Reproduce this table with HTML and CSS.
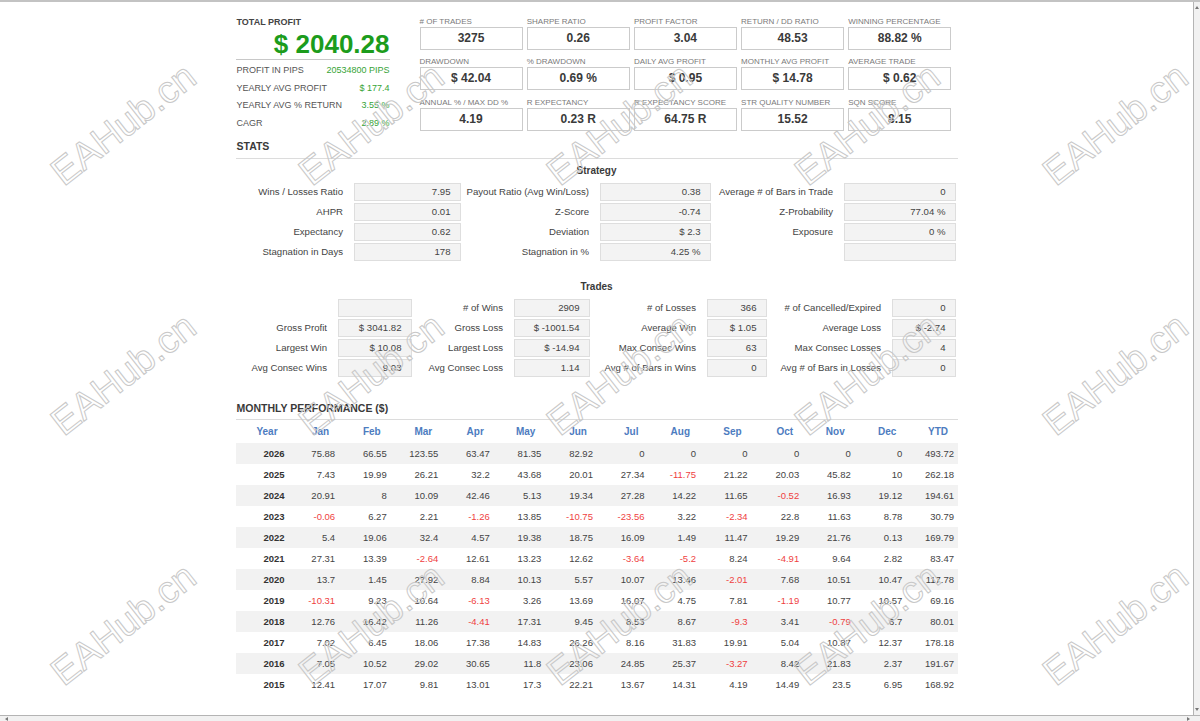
FILE: index.html
```html
<!DOCTYPE html>
<html>
<head>
<meta charset="utf-8">
<title>Strategy Report</title>
<link rel="stylesheet" href="styles.css">
</head>
<body>
<div class="window">
  <div class="viewport">
    <div class="report">
      <div class="top">
        <div class="summary">
          <div class="summary-label">TOTAL PROFIT</div>
          <div class="summary-total">$ 2040.28</div>
          <div class="summary-rows">
            <div class="srow"><span>PROFIT IN PIPS</span><span class="green">20534800 PIPS</span></div>
            <div class="srow"><span>YEARLY AVG PROFIT</span><span class="green">$ 177.4</span></div>
            <div class="srow"><span>YEARLY AVG % RETURN</span><span class="green">3.55 %</span></div>
            <div class="srow"><span>CAGR</span><span class="green">2.89 %</span></div>
          </div>
        </div>
        <div class="kpis">
          <div class="kpi"><div class="kpi-label"># OF TRADES</div><div class="kpi-box">3275</div></div>
          <div class="kpi"><div class="kpi-label">SHARPE RATIO</div><div class="kpi-box">0.26</div></div>
          <div class="kpi"><div class="kpi-label">PROFIT FACTOR</div><div class="kpi-box">3.04</div></div>
          <div class="kpi"><div class="kpi-label">RETURN / DD RATIO</div><div class="kpi-box">48.53</div></div>
          <div class="kpi"><div class="kpi-label">WINNING PERCENTAGE</div><div class="kpi-box">88.82 %</div></div>
          <div class="kpi"><div class="kpi-label">DRAWDOWN</div><div class="kpi-box">$ 42.04</div></div>
          <div class="kpi"><div class="kpi-label">% DRAWDOWN</div><div class="kpi-box">0.69 %</div></div>
          <div class="kpi"><div class="kpi-label">DAILY AVG PROFIT</div><div class="kpi-box">$ 0.95</div></div>
          <div class="kpi"><div class="kpi-label">MONTHLY AVG PROFIT</div><div class="kpi-box">$ 14.78</div></div>
          <div class="kpi"><div class="kpi-label">AVERAGE TRADE</div><div class="kpi-box">$ 0.62</div></div>
          <div class="kpi"><div class="kpi-label">ANNUAL % / MAX DD %</div><div class="kpi-box">4.19</div></div>
          <div class="kpi"><div class="kpi-label">R EXPECTANCY</div><div class="kpi-box">0.23 R</div></div>
          <div class="kpi"><div class="kpi-label">R EXPECTANCY SCORE</div><div class="kpi-box">64.75 R</div></div>
          <div class="kpi"><div class="kpi-label">STR QUALITY NUMBER</div><div class="kpi-box">15.52</div></div>
          <div class="kpi"><div class="kpi-label">SQN SCORE</div><div class="kpi-box">8.15</div></div>
        </div>
      </div>

      <h2 class="section-head stats-head">STATS</h2>

      <h3 class="sub-head strategy-head">Strategy</h3>
      <div class="grid strategy-grid">
        <div class="lbl">Wins / Losses Ratio</div><div class="val">7.95</div>
        <div class="lbl">Payout Ratio (Avg Win/Loss)</div><div class="val">0.38</div>
        <div class="lbl">Average # of Bars in Trade</div><div class="val">0</div>
        <div class="lbl">AHPR</div><div class="val">0.01</div>
        <div class="lbl">Z-Score</div><div class="val">-0.74</div>
        <div class="lbl">Z-Probability</div><div class="val">77.04 %</div>
        <div class="lbl">Expectancy</div><div class="val">0.62</div>
        <div class="lbl">Deviation</div><div class="val">$ 2.3</div>
        <div class="lbl">Exposure</div><div class="val">0 %</div>
        <div class="lbl">Stagnation in Days</div><div class="val">178</div>
        <div class="lbl">Stagnation in %</div><div class="val">4.25 %</div>
        <div class="lbl"></div><div class="val"></div>
      </div>

      <h3 class="sub-head trades-head">Trades</h3>
      <div class="grid trades-grid">
        <div class="lbl"></div><div class="val"></div>
        <div class="lbl"># of Wins</div><div class="val">2909</div>
        <div class="lbl"># of Losses</div><div class="val">366</div>
        <div class="lbl"># of Cancelled/Expired</div><div class="val">0</div>
        <div class="lbl">Gross Profit</div><div class="val">$ 3041.82</div>
        <div class="lbl">Gross Loss</div><div class="val">$ -1001.54</div>
        <div class="lbl">Average Win</div><div class="val">$ 1.05</div>
        <div class="lbl">Average Loss</div><div class="val">$ -2.74</div>
        <div class="lbl">Largest Win</div><div class="val">$ 10.08</div>
        <div class="lbl">Largest Loss</div><div class="val">$ -14.94</div>
        <div class="lbl">Max Consec Wins</div><div class="val">63</div>
        <div class="lbl">Max Consec Losses</div><div class="val">4</div>
        <div class="lbl">Avg Consec Wins</div><div class="val">9.03</div>
        <div class="lbl">Avg Consec Loss</div><div class="val">1.14</div>
        <div class="lbl">Avg # of Bars in Wins</div><div class="val">0</div>
        <div class="lbl">Avg # of Bars in Losses</div><div class="val">0</div>
      </div>

      <h2 class="section-head monthly-head">MONTHLY PERFORMANCE ($)</h2>
      <table class="monthly">
        <thead>
          <tr><th>Year</th><th>Jan</th><th>Feb</th><th>Mar</th><th>Apr</th><th>May</th><th>Jun</th><th>Jul</th><th>Aug</th><th>Sep</th><th>Oct</th><th>Nov</th><th>Dec</th><th>YTD</th></tr>
        </thead>
        <tbody>
          <tr><td class="yr">2026</td><td>75.88</td><td>66.55</td><td>123.55</td><td>63.47</td><td>81.35</td><td>82.92</td><td>0</td><td>0</td><td>0</td><td>0</td><td>0</td><td>0</td><td>493.72</td></tr>
          <tr><td class="yr">2025</td><td>7.43</td><td>19.99</td><td>26.21</td><td>32.2</td><td>43.68</td><td>20.01</td><td>27.34</td><td class="neg">-11.75</td><td>21.22</td><td>20.03</td><td>45.82</td><td>10</td><td>262.18</td></tr>
          <tr><td class="yr">2024</td><td>20.91</td><td>8</td><td>10.09</td><td>42.46</td><td>5.13</td><td>19.34</td><td>27.28</td><td>14.22</td><td>11.65</td><td class="neg">-0.52</td><td>16.93</td><td>19.12</td><td>194.61</td></tr>
          <tr><td class="yr">2023</td><td class="neg">-0.06</td><td>6.27</td><td>2.21</td><td class="neg">-1.26</td><td>13.85</td><td class="neg">-10.75</td><td class="neg">-23.56</td><td>3.22</td><td class="neg">-2.34</td><td>22.8</td><td>11.63</td><td>8.78</td><td>30.79</td></tr>
          <tr><td class="yr">2022</td><td>5.4</td><td>19.06</td><td>32.4</td><td>4.57</td><td>19.38</td><td>18.75</td><td>16.09</td><td>1.49</td><td>11.47</td><td>19.29</td><td>21.76</td><td>0.13</td><td>169.79</td></tr>
          <tr><td class="yr">2021</td><td>27.31</td><td>13.39</td><td class="neg">-2.64</td><td>12.61</td><td>13.23</td><td>12.62</td><td class="neg">-3.64</td><td class="neg">-5.2</td><td>8.24</td><td class="neg">-4.91</td><td>9.64</td><td>2.82</td><td>83.47</td></tr>
          <tr><td class="yr">2020</td><td>13.7</td><td>1.45</td><td>27.92</td><td>8.84</td><td>10.13</td><td>5.57</td><td>10.07</td><td>13.46</td><td class="neg">-2.01</td><td>7.68</td><td>10.51</td><td>10.47</td><td>117.78</td></tr>
          <tr><td class="yr">2019</td><td class="neg">-10.31</td><td>9.23</td><td>10.64</td><td class="neg">-6.13</td><td>3.26</td><td>13.69</td><td>16.07</td><td>4.75</td><td>7.81</td><td class="neg">-1.19</td><td>10.77</td><td>10.57</td><td>69.16</td></tr>
          <tr><td class="yr">2018</td><td>12.76</td><td>16.42</td><td>11.26</td><td class="neg">-4.41</td><td>17.31</td><td>9.45</td><td>8.53</td><td>8.67</td><td class="neg">-9.3</td><td>3.41</td><td class="neg">-0.79</td><td>6.7</td><td>80.01</td></tr>
          <tr><td class="yr">2017</td><td>7.02</td><td>6.45</td><td>18.06</td><td>17.38</td><td>14.83</td><td>26.26</td><td>8.16</td><td>31.83</td><td>19.91</td><td>5.04</td><td>10.87</td><td>12.37</td><td>178.18</td></tr>
          <tr><td class="yr">2016</td><td>7.05</td><td>10.52</td><td>29.02</td><td>30.65</td><td>11.8</td><td>23.06</td><td>24.85</td><td>25.37</td><td class="neg">-3.27</td><td>8.42</td><td>21.83</td><td>2.37</td><td>191.67</td></tr>
          <tr><td class="yr">2015</td><td>12.41</td><td>17.07</td><td>9.81</td><td>13.01</td><td>17.3</td><td>22.21</td><td>13.67</td><td>14.31</td><td>4.19</td><td>14.49</td><td>23.5</td><td>6.95</td><td>168.92</td></tr>
        </tbody>
      </table>
    </div>
  </div>
  <div class="vscroll"><span class="arrow-up"></span><span class="arrow-down"></span></div>
  <div class="hscroll"><span class="arrow-left"></span><span class="arrow-right"></span></div>

  <div class="watermarks">
    <div class="wm-cell"><span class="wm">EAHub.cn</span></div>
    <div class="wm-cell"><span class="wm">EAHub.cn</span></div>
    <div class="wm-cell"><span class="wm">EAHub.cn</span></div>
    <div class="wm-cell"><span class="wm">EAHub.cn</span></div>
    <div class="wm-cell"><span class="wm">EAHub.cn</span></div>
    <div class="wm-cell"><span class="wm">EAHub.cn</span></div>
    <div class="wm-cell"><span class="wm">EAHub.cn</span></div>
    <div class="wm-cell"><span class="wm">EAHub.cn</span></div>
    <div class="wm-cell"><span class="wm">EAHub.cn</span></div>
    <div class="wm-cell"><span class="wm">EAHub.cn</span></div>
    <div class="wm-cell"><span class="wm">EAHub.cn</span></div>
    <div class="wm-cell"><span class="wm">EAHub.cn</span></div>
    <div class="wm-cell"><span class="wm">EAHub.cn</span></div>
    <div class="wm-cell"><span class="wm">EAHub.cn</span></div>
    <div class="wm-cell"><span class="wm">EAHub.cn</span></div>
  </div>
</div>
</body>
</html>
```

FILE: styles.css
```css
html, body {
  margin: 0;
  padding: 0;
  background: #ffffff;
}

body {
  font-family: "Liberation Sans", Arial, sans-serif;
  color: #444;
}

.window {
  position: relative;
  width: 1200px;
  height: 721px;
  box-sizing: border-box;
  border-top: 2px solid #c3c3c3;
  display: grid;
  grid-template-columns: 1fr 7px;
  grid-template-rows: 1fr 6px;
  overflow: hidden;
  background: #fff;
}

.viewport {
  overflow: hidden;
  background: #fff;
}

.vscroll {
  position: relative;
  background: #f1f1f1;
  border-left: 1px solid #b4b4b4;
}

.hscroll {
  position: relative;
  grid-column: 1 / span 2;
  background: #f1f1f1;
  border-top: 1px solid #b4b4b4;
}

.arrow-up, .arrow-down, .arrow-left, .arrow-right {
  position: absolute;
  width: 0;
  height: 0;
}
.arrow-up {
  top: 4px;
  left: 1px;
  border-left: 2px solid transparent;
  border-right: 2px solid transparent;
  border-bottom: 3px solid #777;
}
.arrow-down {
  bottom: 4px;
  left: 1px;
  border-left: 2px solid transparent;
  border-right: 2px solid transparent;
  border-top: 3px solid #777;
}
.arrow-left {
  top: 1px;
  left: 5px;
  border-top: 2px solid transparent;
  border-bottom: 2px solid transparent;
  border-right: 3px solid #777;
}
.arrow-right {
  top: 1px;
  right: 10px;
  border-top: 2px solid transparent;
  border-bottom: 2px solid transparent;
  border-left: 3px solid #777;
}

.report {
  width: 722px;
  margin: 0 auto;
  padding-top: 14px;
}

/* ---------- top block ---------- */
.top {
  display: flex;
  align-items: flex-start;
  gap: 30px;
}

.summary {
  width: 154px;
  flex: none;
}

.summary-label {
  font-size: 9px;
  font-weight: bold;
  line-height: 12px;
  color: #444;
  padding-left: 1px;
}

.summary-total {
  margin-top: 1px;
  font-size: 26px;
  font-weight: bold;
  line-height: 30px;
  color: #1c9c1c;
  text-align: right;
  border-bottom: 1px solid #c8c8c8;
}

.summary-rows {
  padding-top: 2px;
}

.srow {
  display: flex;
  justify-content: space-between;
  font-size: 9px;
  line-height: 17.67px;
  color: #555;
  padding-left: 1px;
}

.green {
  color: #36a336;
}

.kpis {
  display: grid;
  grid-template-columns: repeat(5, 103px);
  column-gap: 4.2px;
  row-gap: 7.5px;
  padding-top: 0.5px;
}

.kpi-label {
  font-size: 8px;
  line-height: 10px;
  color: #7a7a7a;
  white-space: nowrap;
}

.kpi-box {
  box-sizing: border-box;
  height: 23px;
  border: 1px solid #cbcbcb;
  font-size: 12px;
  font-weight: bold;
  line-height: 21px;
  color: #3a3a3a;
  text-align: center;
}

/* ---------- section heads ---------- */
.section-head {
  margin: 0;
  font-size: 10.5px;
  font-weight: bold;
  line-height: 14px;
  color: #3a3a3a;
  padding-left: 1px;
  border-bottom: 1px solid #dcdcdc;
}

.stats-head {
  margin-top: 6.3px;
  padding-bottom: 5px;
}

.monthly-head {
  margin-top: 23.7px;
  padding-bottom: 4.3px;
}

.sub-head {
  margin: 0;
  font-size: 10px;
  font-weight: bold;
  line-height: 13px;
  text-align: center;
  color: #3a3a3a;
}

.strategy-head {
  margin-top: 5.5px;
}

.trades-head {
  margin-top: 19px;
}

/* ---------- stats grids ---------- */
.grid {
  display: grid;
  grid-auto-rows: 18px;
  row-gap: 2px;
  margin-top: 6px;
  font-size: 9.6px;
}

.strategy-grid {
  grid-template-columns: 118px 107px 139px 111px 133px 112px;
}

.trades-grid {
  margin-top: 5.5px;
  grid-template-columns: 102px 74px 102px 76px 117px 60px 125px 64px;
}

.lbl {
  text-align: right;
  padding-right: 10.5px;
  line-height: 18px;
  color: #444;
  white-space: nowrap;
}

.val {
  box-sizing: border-box;
  background: #f3f3f3;
  border: 1px solid #dedede;
  text-align: right;
  padding-right: 9px;
  line-height: 16px;
  color: #444;
  white-space: nowrap;
}

/* ---------- monthly table ---------- */
.monthly {
  width: 722px;
  table-layout: fixed;
  border-collapse: collapse;
  margin-top: 1px;
}

.monthly th {
  height: 22px;
  padding: 0 9.5px 0 0;
  font-size: 10px;
  font-weight: bold;
  color: #4d7cbf;
  text-align: right;
}

.monthly td {
  height: 21px;
  padding: 0 3.5px 0 0;
  font-size: 9.5px;
  color: #444;
  text-align: right;
  white-space: nowrap;
}

.monthly tbody tr:nth-child(odd) {
  background: #f2f2f2;
}

.monthly td.yr {
  font-weight: bold;
  color: #333;
  padding-right: 2.5px;
}

.monthly td.neg {
  color: #ef3f3f;
}

/* ---------- watermark overlay ---------- */
.watermarks {
  position: absolute;
  left: 0;
  top: -3px;
  display: grid;
  grid-template-columns: repeat(5, 248px);
  grid-auto-rows: 250px;
  pointer-events: none;
}

.wm-cell {
  display: flex;
  align-items: center;
  justify-content: center;
}

.wm {
  font-family: "Liberation Sans", Arial, sans-serif;
  font-size: 38px;
  color: transparent;
  -webkit-text-stroke: 1px #c8c8c8;
  transform: rotate(-38deg);
  white-space: nowrap;
}
```
